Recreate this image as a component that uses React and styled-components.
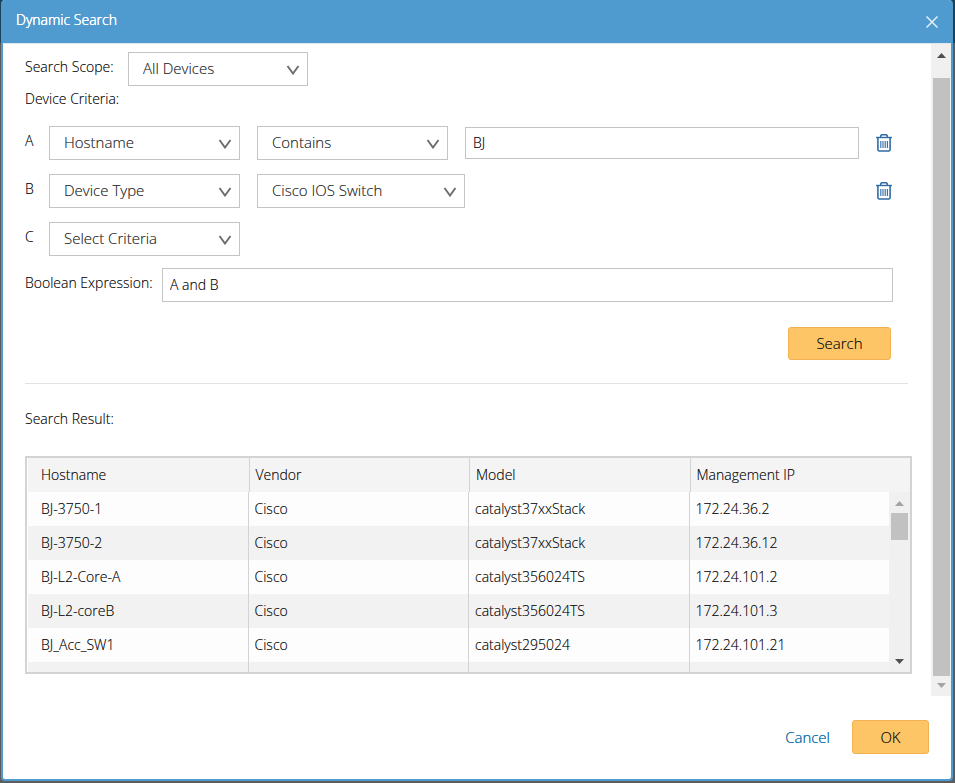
import React, { useState } from "react"
import styled, { createGlobalStyle } from "styled-components"

const devices = [
  { hostname: "BJ-3750-1", vendor: "Cisco", model: "catalyst37xxStack", ip: "172.24.36.2" },
  { hostname: "BJ-3750-2", vendor: "Cisco", model: "catalyst37xxStack", ip: "172.24.36.12" },
  { hostname: "BJ-L2-Core-A", vendor: "Cisco", model: "catalyst356024TS", ip: "172.24.101.2" },
  { hostname: "BJ-L2-coreB", vendor: "Cisco", model: "catalyst356024TS", ip: "172.24.101.3" },
  { hostname: "BJ_Acc_SW1", vendor: "Cisco", model: "catalyst295024", ip: "172.24.101.21" },
  { hostname: "", vendor: "", model: "", ip: "" },
]

const SelectBox = ({ id, label, width, options }) => (
  <SelectWrapper $width={width}>
    <Select id={id} aria-label={label} defaultValue={options[0]}>
      {options.map((option) => (
        <option key={option}>{option}</option>
      ))}
    </Select>
    <Chevron viewBox="0 0 14 10" aria-hidden="true">
      <path d="M1.5 1L7 8.5L12.5 1" />
    </Chevron>
  </SelectWrapper>
)

const DeleteButton = ({ label }) => (
  <TrashButton type="button" aria-label={label}>
    <svg width="16" height="18" viewBox="0 0 16 18" fill="none" stroke="#2f6ba5">
      <path d="M0 3.5H16" strokeWidth="1.4" />
      <path d="M4.7 3V2Q4.7 .8 6 .8H10Q11.3 .8 11.3 2V3" strokeWidth="1.5" />
      <path d="M1.9 4V15.6Q1.9 17 3.3 17H12.7Q14.1 17 14.1 15.6V4" strokeWidth="1.6" />
      <path d="M4.8 7V14M7 7V14M9.2 7V14M11.4 7V14" strokeWidth="1.1" />
    </svg>
  </TrashButton>
)

const Scrollbar = ({ upColor, downColor, children }) => (
  <>
    <Arrow viewBox="0 0 9 5" aria-hidden="true">
      <path d="M0 5L4.5 0L9 5Z" fill={upColor} />
    </Arrow>
    {children}
    <Arrow viewBox="0 0 9 5" aria-hidden="true">
      <path d="M0 0L4.5 5L9 0Z" fill={downColor} />
    </Arrow>
  </>
)

const App = () => {
  const [hostname, setHostname] = useState("BJ")
  const [expression, setExpression] = useState("A and B")

  return (
    <Backdrop>
      <GlobalStyle />
      <Dialog role="dialog" aria-labelledby="dialog-title">
        <Header>
          <Title id="dialog-title">Dynamic Search</Title>
          <CloseButton type="button" aria-label="Close">
            <svg width="12" height="12" viewBox="0 0 12 12" stroke="#e4f0f8" strokeWidth="1.5">
              <path d="M.5 .5L11.5 11.5M11.5 .5L.5 11.5" />
            </svg>
          </CloseButton>
        </Header>
        <Body>
          <Content>
            <Form onSubmit={(e) => e.preventDefault()}>
              <Row>
                <Label htmlFor="scope" $width={103}>
                  Search Scope:
                </Label>
                <SelectBox id="scope" width={180} options={["All Devices"]} />
              </Row>
              <Subtitle>Device Criteria:</Subtitle>
              <Criteria>
                <Row>
                  <Label htmlFor="field-a" $width={24}>
                    A
                  </Label>
                  <Fields>
                    <SelectBox id="field-a" width={191} options={["Hostname"]} />
                    <SelectBox label="Operator A" width={191} options={["Contains"]} />
                    <Input
                      $height={32}
                      aria-label="Value A"
                      value={hostname}
                      onChange={(e) => setHostname(e.target.value)}
                    />
                    <DeleteButton label="Delete A" />
                  </Fields>
                </Row>
                <Row>
                  <Label htmlFor="field-b" $width={24}>
                    B
                  </Label>
                  <Fields>
                    <SelectBox id="field-b" width={191} options={["Device Type"]} />
                    <SelectBox label="Value B" width={208} options={["Cisco IOS Switch"]} />
                    <DeleteButton label="Delete B" />
                  </Fields>
                </Row>
                <Row>
                  <Label htmlFor="field-c" $width={24}>
                    C
                  </Label>
                  <SelectBox id="field-c" width={191} options={["Select Criteria"]} />
                </Row>
              </Criteria>
              <Row>
                <Label htmlFor="expression" $width={137}>
                  Boolean Expression:
                </Label>
                <Input
                  id="expression"
                  $height={34}
                  value={expression}
                  onChange={(e) => setExpression(e.target.value)}
                />
              </Row>
              <Actions>
                <Button type="submit" $width={103} $height={33}>
                  Search
                </Button>
              </Actions>
            </Form>
            <Divider />
            <ResultTitle id="result-title">Search Result:</ResultTitle>
            <TableFrame>
              <Table aria-labelledby="result-title">
                <thead>
                  <tr>
                    <Th>Hostname</Th>
                    <Th>Vendor</Th>
                    <Th>Model</Th>
                    <Th>Management IP</Th>
                  </tr>
                </thead>
                <tbody>
                  {devices.map((device) => (
                    <Tr key={device.hostname}>
                      <Td>{device.hostname}</Td>
                      <Td>{device.vendor}</Td>
                      <Td>{device.model}</Td>
                      <Td>{device.ip}</Td>
                    </Tr>
                  ))}
                </tbody>
              </Table>
              <TableTrack>
                <Scrollbar upColor="#a3a3a3" downColor="#505050">
                  <TableThumb />
                </Scrollbar>
              </TableTrack>
            </TableFrame>
          </Content>
          <Track>
            <Scrollbar upColor="#505050" downColor="#a3a3a3">
              <Thumb />
            </Scrollbar>
          </Track>
        </Body>
        <Footer>
          <Cancel href="#">Cancel</Cancel>
          <Button type="button" $width={77} $height={34}>
            OK
          </Button>
        </Footer>
      </Dialog>
    </Backdrop>
  )
}

export default App

const GlobalStyle = createGlobalStyle`
  * {
    box-sizing: border-box;
  }
  body {
    margin: 0;
    font-family: "Open Sans", sans-serif;
    font-size: 14px;
    font-weight: 300;
    line-height: 20px;
    color: #111;
    /* gives the light weight a little more body */
    text-shadow: 0 0 0 rgba(0, 0, 0, 0.5);
  }
  button, input, select {
    font-family: inherit;
    font-weight: inherit;
    text-shadow: inherit;
  }
`

const Backdrop = styled.div`
  display: flex;
  min-height: 100vh;
  padding: 0 2px 2px 1px;
  background: linear-gradient(#1d4258 43px, #5c5c5e 43px);
`

const Dialog = styled.div`
  flex: 1;
  display: flex;
  flex-direction: column;
  border: 2px solid #4f9bd0;
  border-top: 0;
  border-radius: 4px;
  background: #fff;
`

const Header = styled.header`
  display: flex;
  align-items: center;
  justify-content: space-between;
  height: 43px;
  padding: 0 13px;
  border-radius: 2px 2px 0 0;
  background: #4f9bd0;
`

const Title = styled.h1`
  margin: 0;
  padding-bottom: 3px;
  font-size: 14px;
  font-weight: inherit;
  color: #fff;
  text-shadow: 0 0 0 #fff, 0 0 0 #fff;
`

const CloseButton = styled.button`
  display: flex;
  padding: 0;
  border: 0;
  background: none;
`

const Body = styled.main`
  flex: 1;
  display: flex;
  border-top: 1px solid #e3e8ec;
`

const Content = styled.div`
  flex: 1;
  padding: 8px 19px 22px 22px;
`

const Form = styled.form`
  margin-right: 19px;
`

const Row = styled.div`
  display: flex;
  align-items: center;
`

const Label = styled.label`
  flex: 0 0 ${(props) => props.$width}px;
  padding-bottom: 4px;
  white-space: nowrap;
`

const Subtitle = styled.div`
  margin-bottom: 14px;
  line-height: 26px;
`

const Criteria = styled.div`
  display: grid;
  gap: 14px;
  margin-bottom: 12px;
`

const Fields = styled.div`
  flex: 1;
  display: flex;
  align-items: center;
  gap: 17px;
`

const SelectWrapper = styled.div`
  display: grid;
  flex: 0 0 ${(props) => props.$width}px;
  align-items: center;
`

const Select = styled.select`
  grid-area: 1 / 1;
  height: 34px;
  padding: 0 32px 2px 14px;
  border: 1px solid #c4c4c4;
  border-radius: 0;
  appearance: none;
  background: #fff;
  font-size: 15px;
  color: #333;
`

const Chevron = styled.svg`
  grid-area: 1 / 1;
  justify-self: end;
  width: 14px;
  height: 10px;
  margin: 2px 8px 0 0;
  fill: none;
  stroke: #707070;
  stroke-width: 2;
  pointer-events: none;
`

const Input = styled.input`
  flex: 1;
  min-width: 0;
  height: ${(props) => props.$height}px;
  padding: 0 7px 1px;
  border: 1px solid #c4c4c4;
  font-size: 14px;
  color: #111;
`

const TrashButton = styled.button`
  display: flex;
  margin-left: auto;
  padding: 0 1px 0 0;
  border: 0;
  background: none;
`

const Actions = styled.div`
  display: flex;
  justify-content: flex-end;
  padding: 25px 2px 23px 0;
`

const Button = styled.button`
  width: ${(props) => props.$width}px;
  height: ${(props) => props.$height}px;
  padding: 0 0 1px;
  border: 1px solid #f3b251;
  border-radius: 3px;
  background: #fdc566;
  font-size: 15px;
  color: #111;
`

const Divider = styled.hr`
  height: 1px;
  margin: 0 4px 0 0;
  border: 0;
  background: #e2e2e2;
`

const ResultTitle = styled.h2`
  margin: 25px 0 27px;
  font-size: 14px;
  font-weight: inherit;
`

const TableFrame = styled.div`
  position: relative;
  height: 218px;
  padding-left: 1px;
  overflow: hidden;
  border: 2px solid #d3d3d3;
`

const Table = styled.table`
  width: 100%;
  table-layout: fixed;
  border-collapse: separate;
  border-spacing: 0;
`

const Th = styled.th`
  height: 34px;
  padding: 0 6px;
  border-left: 1px solid #d3d3d3;
  background: #f4f4f4;
  font-weight: inherit;
  text-align: left;

  &:first-child {
    padding-left: 13px;
    border-left: 0;
  }
`

const Td = styled.td`
  height: 34px;
  padding: 0 6px;
  border-right: 1px solid #d3d3d3;

  &:first-child {
    padding-left: 13px;
  }
  &:last-child {
    border-right: 0;
  }
`

const Tr = styled.tr`
  background: #fdfdfd;

  &:nth-child(even) {
    background: #f2f2f2;
  }
`

const Track = styled.div`
  display: flex;
  flex-direction: column;
  align-items: center;
  flex: 0 0 20px;
  gap: 7px;
  padding: 9px 0 8px;
  background: #f0f0f0;
`

// lies over the right edge of the rows, below the column headings
const TableTrack = styled(Track)`
  position: absolute;
  top: 34px;
  right: 0;
  bottom: 0;
  width: 21px;
  justify-content: space-between;
`

const Arrow = styled.svg`
  flex: none;
  width: 9px;
  height: 5px;
`

const Thumb = styled.div`
  flex: 1;
  width: 17px;
  margin-top: 13px;
  background: #c1c1c1;
`

const TableThumb = styled(Thumb)`
  flex: 0 0 27px;
  margin: 0 0 auto;
`

const Footer = styled.footer`
  display: flex;
  align-items: center;
  justify-content: flex-end;
  gap: 22px;
  padding: 24px 22px 25px;
`

const Cancel = styled.a`
  font-size: 15px;
  color: #1474a8;
  text-decoration: none;
  text-shadow: 0 0 0 #1474a8;
`
